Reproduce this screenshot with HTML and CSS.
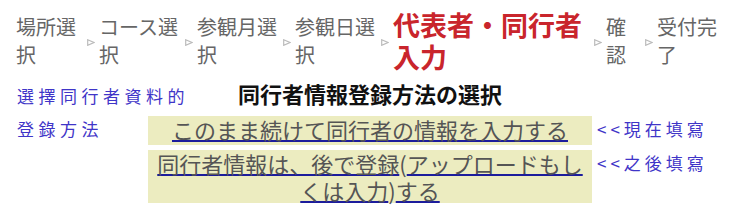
FILE: index.html
```html
<!DOCTYPE html>
<html lang="ja">
<head>
    <meta charset="UTF-8">
    <meta name="viewport" content="width=device-width, initial-scale=1.0">
    <title>同行者情報登録方法の選択</title>
    <link rel="stylesheet" href="styles.css">
</head>
<body>
    <div class="steps">
        <div class="step step-place">場所選択</div>
        <svg class="step-arrow" width="8" height="7" viewBox="0 0 8 7"><polygon points="0.7,0.7 7,3.5 0.7,6.3" fill="none" stroke="#bbb" stroke-width="1.2"/></svg>
        <div class="step step-wide">コース選択</div>
        <svg class="step-arrow" width="8" height="7" viewBox="0 0 8 7"><polygon points="0.7,0.7 7,3.5 0.7,6.3" fill="none" stroke="#bbb" stroke-width="1.2"/></svg>
        <div class="step step-wide">参観月選択</div>
        <svg class="step-arrow" width="8" height="7" viewBox="0 0 8 7"><polygon points="0.7,0.7 7,3.5 0.7,6.3" fill="none" stroke="#bbb" stroke-width="1.2"/></svg>
        <div class="step step-wide">参観日選択</div>
        <svg class="step-arrow" width="8" height="7" viewBox="0 0 8 7"><polygon points="0.7,0.7 7,3.5 0.7,6.3" fill="none" stroke="#bbb" stroke-width="1.2"/></svg>
        <div class="step step-current">代表者・同行者入力</div>
        <svg class="step-arrow" width="8" height="7" viewBox="0 0 8 7"><polygon points="0.7,0.7 7,3.5 0.7,6.3" fill="none" stroke="#bbb" stroke-width="1.2"/></svg>
        <div class="step step-confirm">確認</div>
        <svg class="step-arrow" width="8" height="7" viewBox="0 0 8 7"><polygon points="0.7,0.7 7,3.5 0.7,6.3" fill="none" stroke="#bbb" stroke-width="1.2"/></svg>
        <div class="step step-done">受付完了</div>
    </div>

    <div class="choice">
        <div class="note note-left">選擇同行者資料的<br>登錄方法</div>
        <h2 class="choice-title">同行者情報登録方法の選択</h2>

        <div class="choice-box">
            <a href="#">このまま続けて同行者の情報を入力する</a>
        </div>
        <div class="note note-right">&lt;&lt;現在填寫</div>

        <div class="choice-box choice-box-tall">
            <a href="#">同行者情報は、後で登録</a>(<a href="#">アップロードもしくは入力</a>)<a href="#">する</a>
        </div>
        <div class="note note-right">&lt;&lt;之後填寫</div>
    </div>

    <hr class="divider">
</body>
</html>
```

FILE: styles.css
```css
body {
    margin: 0;
    font-family: "Noto Sans CJK JP", "Noto Sans", sans-serif;
    background: #fff;
}

.steps {
    display: flex;
    align-items: center;
    padding: 9px 0 0 16px;
}

.step {
    font-size: 20px;
    line-height: 28px;
    color: #666;
}

.step-place {
    width: 66px;
}

.step-wide {
    width: 81px;
}

.step-current {
    width: 196px;
    font-size: 27px;
    line-height: 32px;
    font-weight: bold;
    color: #c9252c;
}

.step-confirm {
    width: 34px;
}

.step-done {
    width: 62px;
}

.step-arrow {
    flex-shrink: 0;
    margin: 2px 4px 0 5px;
}

.choice {
    display: grid;
    grid-template-columns: 148px 444px 1fr;
    row-gap: 5px;
    margin-top: 6px;
}

.choice-title {
    grid-column: 2;
    grid-row: 1;
    margin: 0;
    font-size: 22px;
    line-height: 28px;
    font-weight: bold;
    color: #111;
    text-align: center;
}

.note {
    font-family: "Noto Sans CJK TC", "Noto Sans CJK JP", sans-serif;
    font-size: 17px;
    color: #3f35c8;
}

.note-left {
    grid-column: 1;
    grid-row: 1 / 3;
    padding-left: 17px;
    line-height: 33px;
    letter-spacing: 4.5px;
    white-space: nowrap;
}

.note-right {
    grid-column: 3;
    padding-left: 5px;
    line-height: 26px;
    letter-spacing: 4px;
}

.choice-box {
    grid-column: 2;
    background: #ececc0;
    font-size: 22px;
    line-height: 26px;
    color: #555;
    text-align: center;
}

.choice-box-tall {
    line-height: 26.5px;
}

.choice-box a {
    color: #555;
    text-decoration: underline;
    text-decoration-color: #1c1c9c;
    text-decoration-thickness: 2px;
}

.divider {
    width: 600px;
    margin: 13px 0 0 65px;
    border: none;
    border-top: 2px solid #d0d0d0;
}
```
